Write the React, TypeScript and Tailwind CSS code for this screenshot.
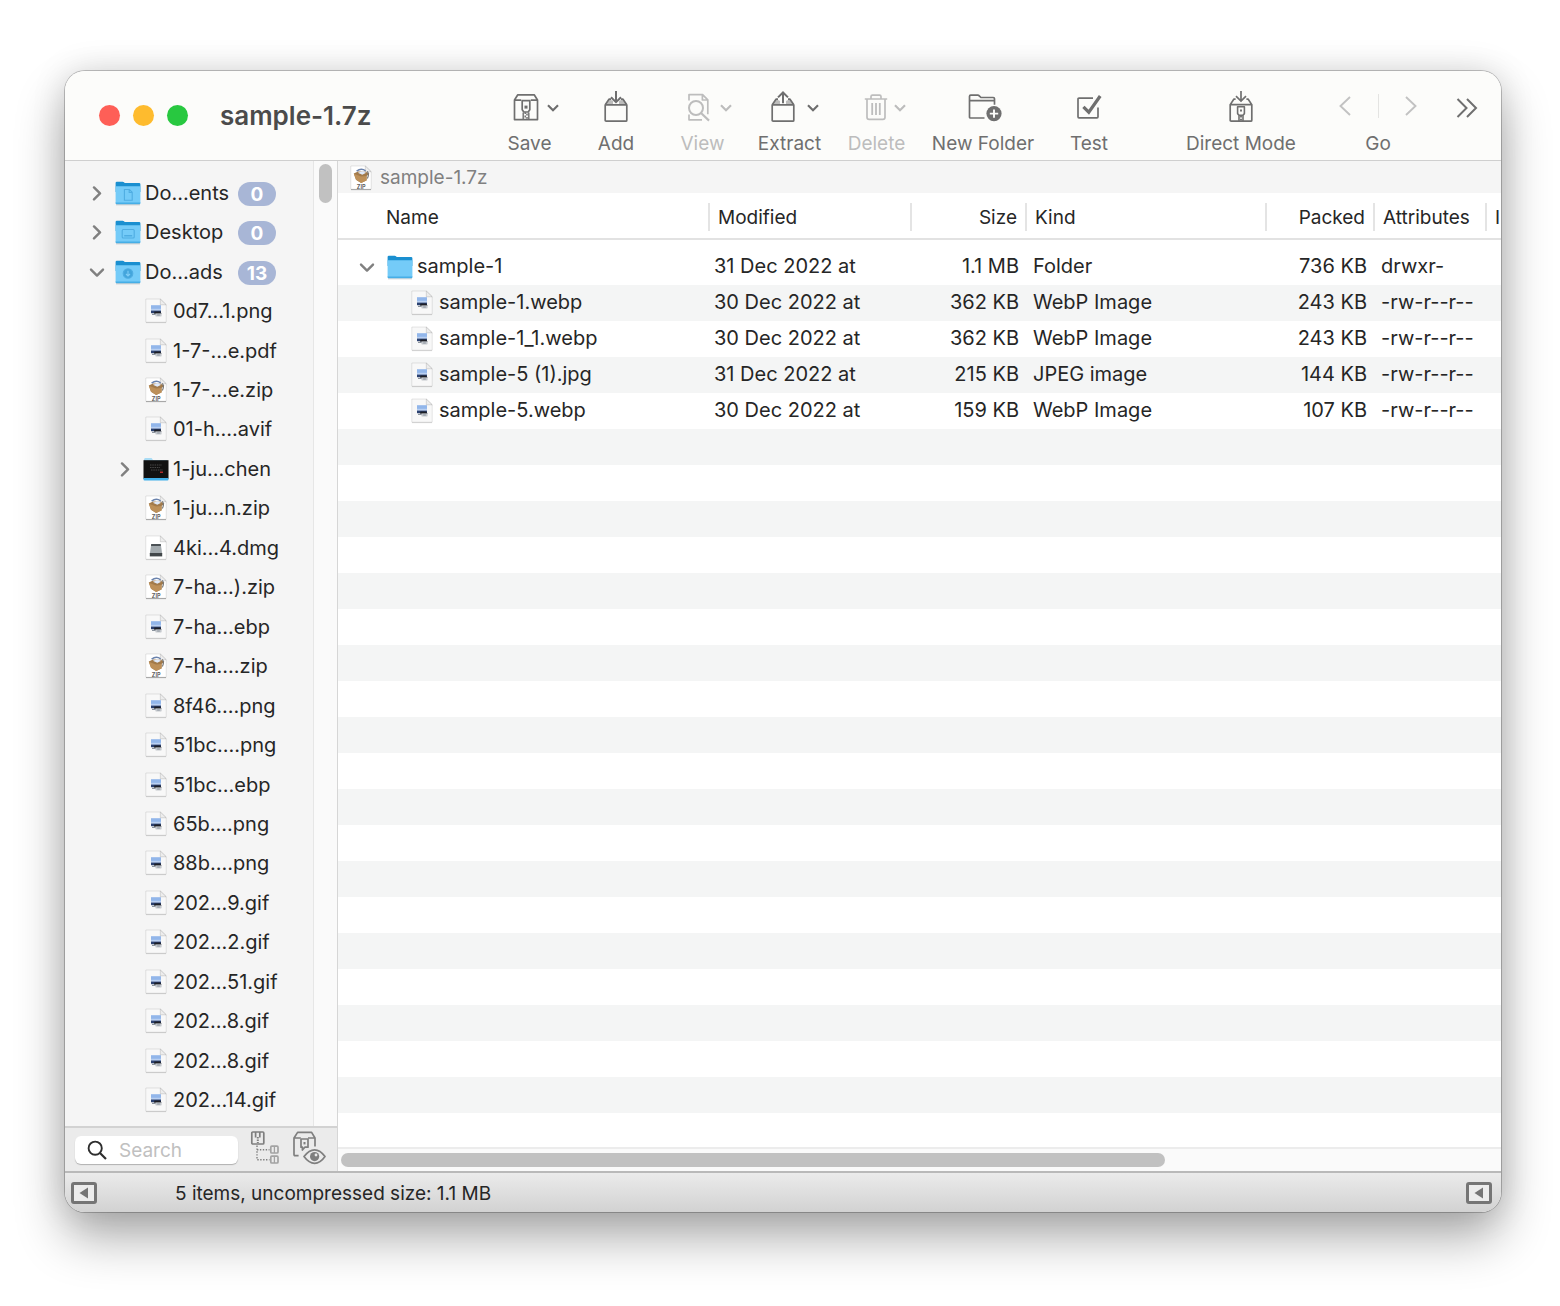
import type { ReactNode } from 'react';

type FileKind = 'image' | 'zip' | 'dmg';
type IconKind = FileKind | 'documents' | 'desktop' | 'downloads' | 'folder' | 'thumb';

interface TreeItem {
  name: string;
  icon: IconKind;
  level: number;
  open?: boolean;
  count?: number;
}

const TREE: TreeItem[] = [
  { name: 'Do…ents', icon: 'documents', level: 0, open: false, count: 0 },
  { name: 'Desktop', icon: 'desktop', level: 0, open: false, count: 0 },
  { name: 'Do…ads', icon: 'downloads', level: 0, open: true, count: 13 },
  { name: '0d7…1.png', icon: 'image', level: 1 },
  { name: '1-7-…e.pdf', icon: 'image', level: 1 },
  { name: '1-7-…e.zip', icon: 'zip', level: 1 },
  { name: '01-h….avif', icon: 'image', level: 1 },
  { name: '1-ju…chen', icon: 'thumb', level: 1, open: false },
  { name: '1-ju…n.zip', icon: 'zip', level: 1 },
  { name: '4ki…4.dmg', icon: 'dmg', level: 1 },
  { name: '7-ha…).zip', icon: 'zip', level: 1 },
  { name: '7-ha…ebp', icon: 'image', level: 1 },
  { name: '7-ha….zip', icon: 'zip', level: 1 },
  { name: '8f46….png', icon: 'image', level: 1 },
  { name: '51bc….png', icon: 'image', level: 1 },
  { name: '51bc…ebp', icon: 'image', level: 1 },
  { name: '65b….png', icon: 'image', level: 1 },
  { name: '88b….png', icon: 'image', level: 1 },
  { name: '202…9.gif', icon: 'image', level: 1 },
  { name: '202…2.gif', icon: 'image', level: 1 },
  { name: '202…51.gif', icon: 'image', level: 1 },
  { name: '202…8.gif', icon: 'image', level: 1 },
  { name: '202…8.gif', icon: 'image', level: 1 },
  { name: '202…14.gif', icon: 'image', level: 1 },
];

const ENTRIES = [
  { name: 'sample-1', folder: true, modified: '31 Dec 2022 at', size: '1.1 MB', kind: 'Folder', packed: '736 KB', attrs: 'drwxr-' },
  { name: 'sample-1.webp', folder: false, modified: '30 Dec 2022 at', size: '362 KB', kind: 'WebP Image', packed: '243 KB', attrs: '-rw-r--r--' },
  { name: 'sample-1_1.webp', folder: false, modified: '30 Dec 2022 at', size: '362 KB', kind: 'WebP Image', packed: '243 KB', attrs: '-rw-r--r--' },
  { name: 'sample-5 (1).jpg', folder: false, modified: '31 Dec 2022 at', size: '215 KB', kind: 'JPEG image', packed: '144 KB', attrs: '-rw-r--r--' },
  { name: 'sample-5.webp', folder: false, modified: '30 Dec 2022 at', size: '159 KB', kind: 'WebP Image', packed: '107 KB', attrs: '-rw-r--r--' },
];

// ── Small icons ───────────────────────────────────────────────────────────────

function Disclosure({ open }: { open: boolean }) {
  return (
    <svg width="16" height="16" viewBox="0 0 16 16" fill="none" stroke="#808080" strokeWidth="2.4" strokeLinecap="round" strokeLinejoin="round">
      <path d={open ? 'M2 5.6l6 6 6-6' : 'M5 2.4l6 6-6 6'} />
    </svg>
  );
}

function FolderIcon({ kind }: { kind: IconKind }) {
  if (kind === 'thumb') {
    return (
      <svg width="26" height="26" viewBox="0 0 26 26">
        <path d="M1 3.6Q1 2 2.4 2h6.2l1.4 2H24v3H1z" fill="#a9dcf5" />
        <rect x="0.5" y="4.2" width="25" height="18.6" fill="#111" />
        <path d="M7 9h12M7 11.5h10M8 14h12" stroke="#555" strokeWidth="0.8" strokeDasharray="1.5 .8" />
        <path d="M17 16.2h3" stroke="#d33" strokeWidth="1.2" />
        <path d="M0.5 22h25v1.6q0 1-1 1h-23q-1 0-1-1z" fill="#41b0ea" />
      </svg>
    );
  }
  return (
    <svg width="26" height="26" viewBox="0 0 26 26">
      <path d="M1 24.8h24" stroke="#000" strokeOpacity=".2" />
      <path d="M0.6 3q0-1.3 1.3-1.3h5.8q.8 0 1.3.6l.7.7h14.4q1.3 0 1.3 1.3V12H0.6z" fill="#1a8fd0" />
      <path d="M0.6 6.2h24.8v16.6q0 1.2-1.2 1.2H1.8q-1.2 0-1.2-1.2z" fill="#74cbf8" />
      <path d="M0.6 22.6h24.8v.4q0 1.2-1.2 1.2H1.8q-1.2 0-1.2-1.2z" fill="#46aee6" />
      <g fill="none" stroke="#4fade2" strokeWidth="1.1">
        {kind === 'documents' && <path d="M9.4 9.5h5l2.8 2.8v8H9.4zM14.2 9.5v3h3" />}
        {kind === 'desktop' && <><rect x="7.2" y="10.5" width="12" height="8.5" rx="1" /><path d="M9.2 16.8h8" strokeWidth="1.4" /></>}
        {kind === 'downloads' && <><circle cx="13" cy="14.5" r="4.8" fill="#43a5dc" /><path d="M13 11.8v5M11 15l2 2 2-2" stroke="#7fcdf6" /></>}
      </g>
    </svg>
  );
}

function FileIcon({ kind }: { kind: IconKind }) {
  return (
    <svg width="22" height="26" viewBox="0 0 22 26">
      <path d="M1 24.6h20" stroke="#000" strokeOpacity={kind === 'zip' ? 0.4 : 0.16} />
      <path d="M.8 1h14.5L21.2 6.6v17.6H.8z" fill={kind === 'image' ? '#f8f8f8' : '#fff'} stroke="#000" strokeOpacity=".14" strokeWidth=".7" />
      <path d="M15.3 1v5.8h5.9z" fill="#ededed" stroke="#000" strokeOpacity=".18" strokeWidth=".7" />
      {kind === 'image' && (
        <>
          <rect x="6" y="7.2" width="10" height="5" fill="#92b6ea" />
          <path d="M6 10.8h10v2H6z" fill="#b9d0f2" />
          <path d="M6 12.6h10v2.6H6z" fill="#2b4170" />
          <path d="M9.4 13.4h5.8l1.4 2.3H9z" fill="#1d1f26" />
          <rect x="10.4" y="15.4" width="6.2" height="3" rx=".6" fill="#c3c7cc" />
          <path d="M7 16.4h3.6M12.2 17h2.600" stroke="#8b939d" strokeWidth="1.1" fill="none" />
        </>
      )}
      {kind === 'zip' && (
        <>
          <path d="M3.800 8.600l4.200-2 7.800.1 3.600 2-2.800 2.400v4.200l-5.400 2.600-5.200-3.200z" fill="#a27a4a" />
          <path d="M3.800 8.800l7.200 2.800 5.600-.6v4.600l-5.400 2.400-5.200-3.200z" fill="#bd9059" />
          <path d="M7.800 7.800l4.600-1.600 3.800 1.600-3.900 2z" fill="#dfeafb" />
          <path d="M6.600 6.200q4.600-3.600 9-.4" fill="none" stroke="#6b83ad" strokeWidth="1.5" />
          <path d="M17.200 6.400q2.400 2.400.2 7.200" fill="none" stroke="#777" strokeWidth="1.2" />
          <text x="11.200" y="23.600" textAnchor="middle" fontSize="5.600" fontWeight="600" fill="#555" fontFamily="Inter, sans-serif">ZIP</text>
        </>
      )}
      {kind === 'dmg' && (
        <>
          <path d="M6.200 9.200h9.600l1.400 9.800H4.800z" fill="#a3aaae" />
          <path d="M6.200 9h9.600v2H6z" fill="#4b5155" />
          <path d="M4.800 18h12.400v3.400H4.800z" fill="#42474a" />
        </>
      )}
    </svg>
  );
}

function ItemIcon({ kind }: { kind: IconKind }) {
  return kind === 'image' || kind === 'zip' || kind === 'dmg' ? <FileIcon kind={kind} /> : <FolderIcon kind={kind} />;
}

// ── Toolbar ───────────────────────────────────────────────────────────────────

function ToolSvg({ width, children }: { width: number; children: ReactNode }) {
  return (
    <svg width={width} height="34" viewBox={`0 0 ${width} 34`} fill="none" stroke="currentColor" strokeWidth="1.7" strokeLinejoin="round">
      {children}
    </svg>
  );
}

function Caret() {
  return (
    <svg width="12" height="8" viewBox="0 0 12 8" fill="none" stroke="currentColor" strokeWidth="2.2">
      <path d="M1 1.2l5 5 5-5" />
    </svg>
  );
}

const SaveIcon = () => (
  <ToolSvg width={26}>
    <path d="M1.5 9L4.8 3.8h16.4L24.5 9v19.6h-23zM1.5 9.200h6.800M17.7 9.200h6.800" />
    <path d="M9.200 9.600h7.600v9.200l-1.600 2.200h-4.400l-1.600-2.200z" />
    <rect x="11.500" y="14.600" width="3" height="3" fill="currentColor" stroke="none" />
    <path d="M10.200 21.400v7M15.800 21.400v7" strokeWidth="1.400" />
    <path d="M12.200 21.200v7.400M14 22.600v6" strokeWidth="1.500" strokeDasharray="1.800 1.600" />
  </ToolSvg>
);

const BoxIcon = ({ up = false }: { up?: boolean }) => (
  <ToolSvg width={24}>
    <path d="M1.200 13.600L5 8l4 2v3.600zM22.800 13.600L19 8l-4 2v3.600z" fill="currentColor" fillOpacity=".45" stroke="none" />
    <path d="M1.200 13.800h21.600v15.400q0 1-1 1H2.200q-1 0-1-1zM1.400 13.400L5 8.200h2M22.600 13.400L19 8.200h-2" />
    {up ? (
      <path d="M12 12.200V1.600M7 6.400l5-4.900 5 4.900" strokeWidth="2" strokeLinejoin="miter" />
    ) : (
      <path d="M12 0v10.600M7 6.200l5 4.900 5-4.900" strokeWidth="2" strokeLinejoin="miter" />
    )}
  </ToolSvg>
);

const ViewIcon = () => (
  <ToolSvg width={26}>
    <path d="M3 9.600V3.600h13.600l5.200 5.200v14.400M16.400 3.800v5.200h5.200M3 23.400v5.400h13" />
    <circle cx="10" cy="17" r="7" strokeWidth="2" />
    <path d="M15 22l8 7.600" strokeWidth="2.200" />
  </ToolSvg>
);

const TrashIcon = () => (
  <ToolSvg width={24}>
    <path d="M.8 8h22.400M7 7.600V5.600q0-1.400 1.500-1.400h7q1.500 0 1.500 1.400v2M3 8.200v18q0 2.200 2.200 2.200h13.600q2.200 0 2.200-2.200v-18" />
    <path d="M8.200 12v12M12 12v12M15.800 12v12" strokeWidth="1.800" />
  </ToolSvg>
);

const NewFolderIcon = () => (
  <ToolSvg width={34}>
    <path d="M16.500 27H2.500q-1 0-1-1V5.400q0-1.200 1.200-1.200h7.100q.9 0 1.500.7l1.600 1.600h12.300q1.300 0 1.300 1.300v6M1.600 9.600h24.600" />
    <circle cx="26" cy="22.600" r="7.600" fill="currentColor" stroke="none" />
    <path d="M26 18.400v8.400M21.800 22.600h8.400" stroke="#fcfcfa" strokeWidth="1.900" />
  </ToolSvg>
);

const TestIcon = () => (
  <ToolSvg width={26}>
    <path d="M17 7.200H3q-1 0-1 1v17.600q0 1 1 1h18q1 0 1-1V16.500" />
    <path d="M7.400 15.800l5.400 5.400L24.200 5" strokeWidth="3.200" strokeLinejoin="miter" />
  </ToolSvg>
);

const DirectIcon = () => (
  <ToolSvg width={24}>
    <path d="M1.200 13.600h21.600v15.600q0 1-1 1H2.200q-1 0-1-1zM1.400 13.400L4.800 8.200h1.800M22.600 13.400L19.200 8.200h-1.800" />
    <path d="M12 0v9.600M7 5.200l5 4.900 5-4.900" strokeLinejoin="miter" />
    <path d="M8.600 15.800h6.800v6.800l-1.400 1.600h-4l-1.400-1.600zM10 24.600v5.400M14 24.600v5.400" strokeWidth="1.600" />
    <path d="M12 18.600v2M12 24.600v5.600" strokeWidth="1.900" strokeDasharray="1.900 1.200" />
  </ToolSvg>
);

function Tool({ label, width = 'w-[86px]', iconRow = '', caret = false, disabled = false, children }: {
  label: string;
  width?: string;
  iconRow?: string;
  caret?: boolean;
  disabled?: boolean;
  children: ReactNode;
}) {
  return (
    <button type="button" disabled={disabled} className={`${width} shrink-0 flex flex-col items-center ${disabled ? 'text-[#bdbdbd]' : 'text-[#6f6f6f]'}`}>
      <span className={`h-[34px] flex items-center ${iconRow}`}>
        {children}
        {caret && <Caret />}
      </span>
      <span className="mt-[7px] text-[19px] leading-6 whitespace-nowrap">{label}</span>
    </button>
  );
}

function Toolbar() {
  return (
    <header className="shrink-0 h-[90px] flex items-center pl-[34px] pr-[23px] bg-[#fcfcfa] border-b border-[#cfcfcf]">
      <div className="flex gap-[13px]">
        <button type="button" aria-label="Close" className="size-[21px] rounded-full bg-[#fe5f57]" />
        <button type="button" aria-label="Minimize" className="size-[21px] rounded-full bg-[#febb2e]" />
        <button type="button" aria-label="Zoom" className="size-[21px] rounded-full bg-[#28c840]" />
      </div>
      <h1 className="ml-8 text-[26px] leading-8 font-semibold text-[#4b4b4b] whitespace-nowrap">sample-1.7z</h1>
      <div className="ml-auto pt-4 flex items-center">
        <Tool label="Save" width="w-[87px]" iconRow="gap-2 pl-3" caret><SaveIcon /></Tool>
        <Tool label="Add"><BoxIcon /></Tool>
        <Tool label="View" width="w-[87px]" iconRow="gap-2 pl-3" caret disabled><ViewIcon /></Tool>
        <Tool label="Extract" width="w-[87px]" iconRow="gap-3 pl-2.5" caret><BoxIcon up /></Tool>
        <Tool label="Delete" width="w-[87px]" iconRow="gap-1.5 pl-4" caret disabled><TrashIcon /></Tool>
        <Tool label="New Folder" width="w-[126px]" iconRow="pl-1"><NewFolderIcon /></Tool>
        <Tool label="Test"><TestIcon /></Tool>
        <div className="w-[53px]" />
        <Tool label="Direct Mode" width="w-[112px]"><DirectIcon /></Tool>
        <div className="ml-[41px] w-20 flex flex-col items-center text-[#6f6f6f]">
          <div className="h-[34px] pb-1 w-full flex items-center justify-between text-[#c2c2c2]">
            <button type="button" aria-label="Back">
              <svg width="14" height="22" viewBox="0 0 14 22" fill="none" stroke="currentColor" strokeWidth="1.9"><path d="M12 2L2.500 11 12 20" /></svg>
            </button>
            <span className="w-px h-6 bg-[#e4e4e2]" />
            <button type="button" aria-label="Forward">
              <svg width="14" height="22" viewBox="0 0 14 22" fill="none" stroke="currentColor" strokeWidth="1.9"><path d="M2 2l9.500 9L2 20" /></svg>
            </button>
          </div>
          <span className="mt-[7px] text-[19px] leading-6">Go</span>
        </div>
        <button type="button" aria-label="More tools" className="ml-[38px] mb-8 text-[#6f6f6f]">
          <svg width="22" height="22" viewBox="0 0 22 22" fill="none" stroke="currentColor" strokeWidth="2"><path d="M1.500 2l9 9-9 9M11 2l9 9-9 9" /></svg>
        </button>
      </div>
    </header>
  );
}

// ── Sidebar ───────────────────────────────────────────────────────────────────

function TreeRow({ item }: { item: TreeItem }) {
  const nested = item.level > 0;
  return (
    <li className={`flex-1 min-h-0 flex items-center ${nested ? 'pl-[52px]' : 'pl-6'}`}>
      {item.open !== undefined ? (
        <button type="button" aria-label={`Toggle ${item.name}`} className="w-[26px] shrink-0"><Disclosure open={item.open} /></button>
      ) : (
        <span className="w-[26px] shrink-0" />
      )}
      <span className="w-[26px] shrink-0 flex justify-center"><ItemIcon kind={item.icon} /></span>
      <span className="ml-1 text-[20px] leading-6 text-[#262626] whitespace-nowrap">{item.name}</span>
      {item.count !== undefined && (
        <span className="mt-0.5 ml-auto mr-[37px] min-w-[38px] h-6 px-2 rounded-full bg-[#a8b6d6] text-white text-[19px] leading-[25px] font-bold text-center">{item.count}</span>
      )}
    </li>
  );
}

function Sidebar() {
  return (
    <aside className="w-[273px] shrink-0 flex flex-col border-r border-[#d6d6d6] bg-[#f5f5f5]">
      <div className="flex-1 min-h-0 flex">
        <ul className="flex-1 min-w-0 flex flex-col pt-3 pb-1.5">
          {TREE.map((item, i) => <TreeRow key={i} item={item} />)}
        </ul>
        <div className="w-6 shrink-0 border-l border-[#e6e6e6] bg-[#fafafa] pt-[3px] flex justify-center">
          <div className="w-[13px] h-[39px] rounded-full bg-[#c1c1c1]" />
        </div>
      </div>
      <div className="h-[45px] shrink-0 flex items-center border-t-2 border-[#d2d2d2] bg-[#ebebeb] pl-2.5">
        <label className="w-[163px] h-7 flex items-center rounded-md bg-white pl-3 shadow-[0_1px_1px_rgba(0,0,0,0.25)]">
          <svg width="20" height="20" viewBox="0 0 20 20" fill="none" stroke="#2e2e2e" strokeWidth="1.9">
            <circle cx="8.200" cy="8.200" r="6.600" />
            <path d="M13 13l6 6" strokeWidth="2.200" />
          </svg>
          <input type="text" aria-label="Search" placeholder="Search" className="mt-0.5 ml-3 w-[100px] bg-transparent outline-none text-[19px] leading-6 placeholder:text-[#c0c0c0]" />
        </label>
        <button type="button" aria-label="Show archive tree" className="ml-3 mb-1">
          <svg width="30" height="34" viewBox="0 0 30 34" fill="none" stroke="#7f7f7f" strokeWidth="1.7">
            <rect x="1.800" y="1" width="12" height="12" rx="1" />
            <path d="M5.600 1v5.400M9.800 1v5.400" />
            <path d="M7.800 6v6" strokeDasharray="1.500 1" strokeWidth="2" />
            <path d="M7 14.500v14.200h12.500M7 18.700h12.500" strokeDasharray="1.400 1.500" strokeWidth="1.400" />
            <g stroke="#a3a3a3">
              <rect x="20.800" y="15.200" width="7.200" height="6.800" rx="1" />
              <rect x="20.800" y="25.200" width="7.200" height="6.800" rx="1" />
              <path d="M24.400 15v7M24.400 25v7" strokeWidth="1.300" />
            </g>
          </svg>
        </button>
        <button type="button" aria-label="Preview archive" className="ml-3 mb-1">
          <svg width="34" height="34" viewBox="0 0 34 34" fill="none" stroke="#7f7f7f" strokeWidth="1.7" strokeLinejoin="round">
            <path d="M6.600 24.600H3q-1 0-1-1V7l3.600-5.600h14L23 7v8.600M2 7h6.800M16 7h7" />
            <path d="M9 8h7v8.200h-3.200L10.400 19v-2.800H9z" />
            <path d="M12.500 11v2.400" strokeWidth="2" />
            <path d="M12 25.600q5-6.800 10.600-6.800t10.400 6.800q-4.800 6.800-10.400 6.800T12 25.600z" fill="#ebebeb" />
            <circle cx="22.600" cy="25.600" r="4.600" fill="#7f7f7f" stroke="none" />
            <circle cx="24" cy="24" r="1.400" fill="#ebebeb" stroke="none" />
          </svg>
        </button>
      </div>
    </aside>
  );
}

// ── Archive listing ───────────────────────────────────────────────────────────

function HeadCell({ children, first = false, right = false }: { children: ReactNode; first?: boolean; right?: boolean }) {
  return (
    <th scope="col" className="p-0 font-normal">
      <div className="h-[47px] pt-0.5 mb-[9px] flex items-center border-b-2 border-[#e2e2e2]">
        <div className={`h-7 flex-1 min-w-0 overflow-hidden leading-[30px] ${first ? 'pl-12' : 'border-l-2 border-[#e4e4e4] px-2'} ${right ? 'text-right' : 'text-left'}`}>{children}</div>
      </div>
    </th>
  );
}

function Listing() {
  return (
    <section className="flex-1 min-w-0 flex flex-col bg-white">
      <div className="h-8 shrink-0 pt-0.5 flex items-center gap-2 pl-3 bg-[#f5f5f5] text-[19px] leading-6 text-[#808080]">
        <FileIcon kind="zip" />
        <span>sample-1.7z</span>
      </div>
      <div className="flex-1 min-h-0 flex flex-col overflow-hidden">
        <table className="w-full table-fixed border-collapse text-[#262626]">
          <colgroup>
            <col />
            <col className="w-[202px]" />
            <col className="w-[115px]" />
            <col className="w-[240px]" />
            <col className="w-[108px]" />
            <col className="w-[112px]" />
            <col className="w-[16px]" />
          </colgroup>
          <thead className="text-[19px]">
            <tr>
              <HeadCell first>Name</HeadCell>
              <HeadCell>Modified</HeadCell>
              <HeadCell right>Size</HeadCell>
              <HeadCell>Kind</HeadCell>
              <HeadCell right>Packed</HeadCell>
              <HeadCell>Attributes</HeadCell>
              <HeadCell>I</HeadCell>
            </tr>
          </thead>
          <tbody className="text-[20px] leading-6 whitespace-nowrap">
            {ENTRIES.map(e => (
              <tr key={e.name} className="h-9 even:bg-[#f4f5f5]">
                <td className="p-0">
                  {e.folder ? (
                    <div className="flex items-center pl-[21px]">
                      <button type="button" aria-label="Toggle sample-1" className="w-7"><Disclosure open /></button>
                      <FolderIcon kind="folder" />
                      <span className="ml-1 pb-0.5">{e.name}</span>
                    </div>
                  ) : (
                    <div className="flex items-center pl-[73px]">
                      <FileIcon kind="image" />
                      <span className="ml-1.5 pb-0.5">{e.name}</span>
                    </div>
                  )}
                </td>
                <td className="pt-0 pb-0.5 px-1.5">{e.modified}</td>
                <td className="pt-0 pb-0.5 px-1.5 text-right">{e.size}</td>
                <td className="pt-0 pb-0.5 px-2">{e.kind}</td>
                <td className="pt-0 pb-0.5 px-1.5 text-right">{e.packed}</td>
                <td className="pt-0 pb-0.5 px-2">{e.attrs}</td>
                <td className="p-0" />
              </tr>
            ))}
          </tbody>
        </table>
        {/* striping continues below the last entry */}
        <div className="flex-1 bg-[repeating-linear-gradient(to_bottom,#f4f5f5_0px,#f4f5f5_36px,#ffffff_36px,#ffffff_72px)]" />
      </div>
      <div className="h-6 shrink-0 flex items-center border-t-2 border-[#ececec] bg-[#fafafa] pl-[3px]">
        <div className="w-[71%] h-[14px] rounded-full bg-[#c1c1c1]" />
      </div>
    </section>
  );
}

function PaneToggle({ label }: { label: string }) {
  return (
    <button type="button" aria-label={label}>
      <svg width="26" height="22" viewBox="0 0 26 22">
        <rect x="1.500" y="1.500" width="23" height="19" rx="1.500" fill="#ececec" stroke="#757575" strokeWidth="3" />
        <path d="M17 5.500v11L8.500 11z" fill="#757575" />
      </svg>
    </button>
  );
}

export default function App() {
  return (
    <div className="min-h-screen flex bg-white pt-[71px] pr-[59px] pb-[94px] pl-[65px] font-[Inter,'Liberation_Sans',sans-serif]">
      <main className="flex-1 min-w-0 flex flex-col overflow-hidden rounded-[20px] bg-white shadow-[0_0_0_1px_rgba(0,0,0,0.22),0_26px_50px_rgba(0,0,0,0.32),0_0_34px_rgba(0,0,0,0.13)]">
        <Toolbar />
        <div className="flex-1 min-h-0 flex">
          <Sidebar />
          <Listing />
        </div>
        <footer className="h-[41px] shrink-0 flex items-center justify-between pl-1.5 pr-[9px] border-t-2 border-[#b9b9b9] bg-linear-to-b from-[#ebebeb] to-[#d2d2d2]">
          <PaneToggle label="Toggle left pane" />
          <p className="flex-1 mt-0.5 pl-[78px] text-[19px] leading-6 text-[#262626]">5 items, uncompressed size: 1.1 MB</p>
          <PaneToggle label="Toggle right pane" />
        </footer>
      </main>
    </div>
  );
}
